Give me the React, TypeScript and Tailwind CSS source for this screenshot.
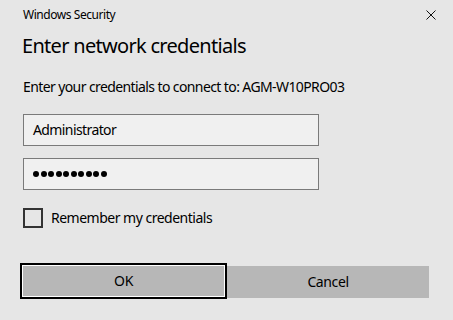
import React from 'react';

const App = () => {
  return (
    <div
      className="w-[453px] h-[320px] bg-[#e6e6e6] text-[#000] overflow-hidden"
      style={{ fontFamily: '"Segoe UI", "Noto Sans", sans-serif' }}
    >
      {/* Title bar */}
      <div className="flex items-center justify-between h-[30px] pl-[23px] pr-[17px]">
        <span className="text-[12px] leading-none tracking-[-0.45px]">Windows Security</span>
        <svg width="10" height="10" viewBox="0 0 10 10" className="block">
          <path d="M0.5 0.5 L9.5 9.5 M9.5 0.5 L0.5 9.5" stroke="#111" strokeWidth="1" />
        </svg>
      </div>

      <div className="px-[23px]">
        <h1 className="h-[32px] flex items-center text-[20px] leading-none -ml-[1px] tracking-[-0.7px]">
          Enter network credentials
        </h1>
        <p className="mt-[15px] h-[20px] flex items-center text-[14px] leading-none tracking-[-0.6px]">
          Enter your credentials to connect to: AGM-W10PRO03
        </p>

        <div className="mt-[17px] w-[296px] h-[32px] border border-[#7a7a7a] bg-[#f0f0f0] flex items-center pl-[9px] text-[14px] leading-none tracking-[-0.6px]">
          Administrator
        </div>
        <div className="mt-[12px] w-[296px] h-[32px] border border-[#7a7a7a] bg-[#f0f0f0] flex items-center pl-[9px] gap-[1.5px]">
          {Array.from({ length: 10 }).map((_, i) => (
            <span key={i} className="w-[6px] h-[6px] rounded-full bg-black" />
          ))}
        </div>

        <label className="mt-[18px] h-[20px] flex items-center gap-[8px]">
          <span className="w-[20px] h-[20px] border-2 border-[#333]" />
          <span className="text-[14px] leading-none tracking-[-0.5px]">Remember my credentials</span>
        </label>
      </div>

      {/* Buttons */}
      <div className="mt-[35px] pl-[20px] flex items-start">
        <button className="w-[207px] h-[36px] bg-[#b7b7b7] border-2 border-black shadow-[inset_0_0_0_1px_#ffffff] text-[14px] leading-none tracking-[-0.4px]">
          OK
        </button>
        <button className="mt-[3px] w-[202px] h-[32px] bg-[#b7b7b7] text-[14px] leading-none tracking-[-0.4px]">
          Cancel
        </button>
      </div>
    </div>
  );
};

export default App;
